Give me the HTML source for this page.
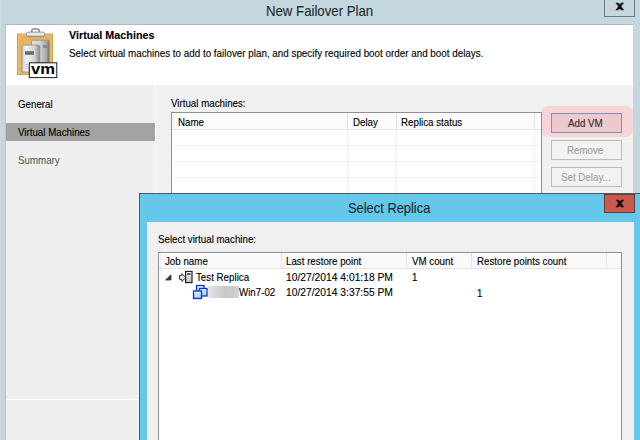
<!DOCTYPE html>
<html><head><meta charset="utf-8">
<style>
*{margin:0;padding:0;box-sizing:border-box}
html,body{width:640px;height:440px;overflow:hidden}
body{position:relative;background:#c5d7de;font-family:"Liberation Sans",sans-serif;font-size:10px;color:#000}
.a{position:absolute}
.t{position:absolute;white-space:nowrap;line-height:1;-webkit-text-stroke:0.12px currentColor;font-size:11px;transform:scaleX(.886);transform-origin:0 0}
</style></head><body>
<div class="a" style="left:0;top:0;width:1px;height:440px;background:#cddbe0"></div>
<!-- main window title -->
<div class="t" style="left:266px;top:3px;font-size:15px;transform:scaleX(.88);color:#1e2a30">New Failover Plan</div>
<div class="a" style="left:604px;top:-1px;width:31px;height:18px;border:1px solid #6e7a7e"></div>
<div class="t" style="left:616px;top:-0.9px;font-size:13.5px;font-weight:bold;transform:none;-webkit-text-stroke:0.6px #000">x</div>

<!-- main content -->
<div class="a" style="left:5px;top:24px;width:628px;height:416px;background:#b4c7ce"></div>
<div class="a" style="left:5px;top:24px;width:628px;height:1px;background:#a9bcc3"></div>
<div class="a" style="left:6px;top:25px;width:627px;height:60px;background:#fff"></div>
<div class="a" style="left:6px;top:85px;width:149px;height:355px;background:#efefef"></div>
<div class="a" style="left:155px;top:85px;width:1px;height:355px;background:#fff"></div>
<div class="a" style="left:156px;top:85px;width:477px;height:355px;background:#f0f0f0"></div>
<div class="a" style="left:6px;top:399px;width:149px;height:1px;background:#fff"></div>


<!-- header icon -->
<svg class="a" style="left:14px;top:26px" width="46" height="54" viewBox="0 0 46 54">
<defs>
<linearGradient id="sv" x1="0" x2="1" y1="0" y2="0"><stop offset="0" stop-color="#d0d0d0"/><stop offset="0.25" stop-color="#f2f2f2"/><stop offset="0.7" stop-color="#d4d4d4"/><stop offset="1" stop-color="#888"/></linearGradient>
<linearGradient id="sv2" x1="0" x2="1" y1="0" y2="0"><stop offset="0" stop-color="#e0e0e0"/><stop offset="0.5" stop-color="#d0d0d0"/><stop offset="0.85" stop-color="#a8a8a8"/><stop offset="1" stop-color="#6a6a6a"/></linearGradient>
<linearGradient id="cl" x1="0" x2="0" y1="0" y2="1"><stop offset="0" stop-color="#c8c8c8"/><stop offset="0.45" stop-color="#fafafa"/><stop offset="1" stop-color="#9a9a9a"/></linearGradient>
</defs>
<rect x="3.5" y="8" width="35" height="40.5" fill="#e7b35c" stroke="#cf9a4a"/>
<rect x="4.5" y="9" width="33" height="38.5" fill="none" stroke="#ecbf70" stroke-width="1"/>
<path d="M17.8 6.8 V4.6 a1.6 1.6 0 0 1 1.6 -1.6 h4.2 a1.6 1.6 0 0 1 1.6 1.6 V6.8" fill="none" stroke="#8c8c8c" stroke-width="1.5"/>
<rect x="12.2" y="6" width="18.6" height="4.8" rx="2.3" fill="url(#cl)" stroke="#8a8a8a" stroke-width="0.8"/>
<path d="M17.5 37 V15.5 q0 -1.3 1.3 -1.3 h15.2 q1.2 0 1.2 1.3 V37 Z" fill="url(#sv2)" stroke="#8a8a8a" stroke-width="0.8"/>
<rect x="29" y="19" width="4" height="3" fill="#8a8a8a"/>
<path d="M8 46 V20.5 q0 -1.5 1.5 -1.5 h14.8 q1.5 0 1.5 1.5 V46 Z" fill="url(#sv)" stroke="#8c8c8c" stroke-width="0.8"/>
<rect x="11" y="25.2" width="9" height="3.6" fill="#6c6c6c"/>
<path d="M11 38.5 h8 M11 40.5 h8 M11 42.5 h8" stroke="#b0b0b0" stroke-width="0.6"/>
<rect x="15.3" y="36.8" width="27.5" height="14.8" fill="#fff" stroke="#1a1a1a" stroke-width="1"/>
<text x="17" y="48.2" font-family="Liberation Sans" font-weight="bold" font-size="15" textLength="24" lengthAdjust="spacingAndGlyphs" fill="#000">vm</text>
</svg>
<!-- header -->
<div class="t" style="left:69px;top:29.5px;font-weight:bold;transform:scaleX(.98)">Virtual Machines</div>
<div class="t" style="left:69px;top:48.2px;transform:scaleX(.894)">Select virtual machines to add to failover plan, and specify required boot order and boot delays.</div>

<!-- nav -->
<div class="t" style="left:18px;top:99.3px">General</div>
<div class="a" style="left:6px;top:122.5px;width:149px;height:18.5px;background:#a3a3a3"></div>
<div class="t" style="left:18px;top:127px">Virtual Machines</div>
<div class="t" style="left:18px;top:155px;color:#606060">Summary</div>

<!-- VM table -->
<div class="t" style="left:171px;top:98.3px">Virtual machines:</div>
<div class="a" style="left:541px;top:106px;width:92px;height:31px;background:#f6d5d8;border-radius:7px"></div>
<div class="a" style="left:171px;top:112px;width:371px;height:330px;border:1px solid #8c9098;background:#fff"></div>
<div class="a" style="left:172px;top:113px;width:369px;height:16px;background:#fbfbfb"></div>
<div class="a" style="left:173px;top:114px;width:1px;height:15px;background:#ececec"></div>
<div class="a" style="left:172px;top:129px;width:369px;height:1px;background:#e5e5e5"></div>

<div class="a" style="left:347px;top:113px;width:1px;height:16px;background:#e5e5e5"></div>
<div class="a" style="left:396px;top:113px;width:1px;height:16px;background:#e5e5e5"></div>
<div class="a" style="left:534px;top:113px;width:1px;height:16px;background:#e5e5e5"></div>
<div class="a" style="left:534px;top:130px;width:1px;height:70px;background:#f0f0f0"></div>
<div class="a" style="left:347px;top:130px;width:1px;height:70px;background:#f0f0f0"></div>
<div class="a" style="left:396px;top:130px;width:1px;height:70px;background:#f0f0f0"></div>
<div class="a" style="left:172px;top:145px;width:369px;height:1px;background:#f0f0f0"></div>
<div class="a" style="left:172px;top:161px;width:369px;height:1px;background:#f0f0f0"></div>
<div class="a" style="left:172px;top:177px;width:369px;height:1px;background:#f0f0f0"></div>
<div class="t" style="left:178px;top:117px">Name</div>
<div class="t" style="left:353px;top:117px">Delay</div>
<div class="t" style="left:401px;top:117px">Replica status</div>

<!-- buttons -->
<div class="a" style="left:551px;top:113px;width:71px;height:20px;border:1px solid #7f8fb5;background:#ecc9cc"></div>
<div class="t" style="left:567.5px;top:118px;color:#302828">Add VM</div>
<div class="a" style="left:551px;top:140px;width:71px;height:20px;border:1px solid #bdbdbd;background:#f2f2f2"></div>
<div class="t" style="left:567px;top:145.1px;color:#a0a0a0">Remove</div>
<div class="a" style="left:551px;top:167px;width:71px;height:20px;border:1px solid #bdbdbd;background:#f2f2f2"></div>
<div class="t" style="left:560.7px;top:172.1px;color:#a0a0a0">Set Delay...</div>

<!-- Select Replica dialog -->
<div class="a" style="left:139px;top:193px;width:502px;height:248px;background:#65c8ea;border:1px solid #505a5e"></div>
<div class="t" style="left:348px;top:200.5px;font-size:14px;transform:scaleX(.92);color:#1a2a30">Select Replica</div>
<div class="a" style="left:604px;top:194px;width:31px;height:19px;background:#c85a4f;border:1px solid #6a3a36"></div>
<div class="t" style="left:616px;top:195.5px;font-size:13.5px;font-weight:bold;transform:none;-webkit-text-stroke:0.6px #000">x</div>
<div class="a" style="left:147px;top:222px;width:487px;height:218px;background:#f0f0f0"></div>
<div class="t" style="left:158px;top:233.5px">Select virtual machine:</div>
<div class="a" style="left:158px;top:252px;width:464px;height:200px;border:1px solid #8c9098;background:#fff"></div>
<div class="a" style="left:159px;top:253px;width:462px;height:15px;background:#f9f9f9"></div>
<div class="a" style="left:160px;top:254px;width:1px;height:14px;background:#ececec"></div>
<div class="a" style="left:159px;top:268px;width:462px;height:1px;background:#e5e5e5"></div>

<div class="a" style="left:281px;top:253px;width:1px;height:15px;background:#e5e5e5"></div>
<div class="a" style="left:406px;top:253px;width:1px;height:15px;background:#e5e5e5"></div>
<div class="a" style="left:471px;top:253px;width:1px;height:15px;background:#e5e5e5"></div>
<div class="a" style="left:606px;top:253px;width:1px;height:15px;background:#e5e5e5"></div>
<svg class="a" style="left:160px;top:268px" width="52" height="34" viewBox="0 0 52 34">
<defs>
<linearGradient id="vb" x1="0" x2="0" y1="0" y2="1"><stop offset="0" stop-color="#e0f6ff"/><stop offset="1" stop-color="#90d0f4"/></linearGradient>
<linearGradient id="sg" x1="0" x2="0" y1="0" y2="1"><stop offset="0" stop-color="#f4f4f4"/><stop offset="1" stop-color="#c0c0c0"/></linearGradient>
</defs>
<path d="M5.5 12 L11 6.8 L11 12 Z" fill="#383838" stroke="#383838" stroke-width="0.8" stroke-linejoin="round"/>
<path d="M19.6 7.6 H21.8 V5.6 L26 9.5 L21.8 13.4 V11.4 H19.6 Z" fill="#e6f4fb" stroke="#303030" stroke-width="1" stroke-linejoin="round"/>
<rect x="25.6" y="3.4" width="6.4" height="11.2" fill="url(#sg)" stroke="#222" stroke-width="1.2"/>
<rect x="27" y="5" width="3.6" height="2" fill="#606060"/>
<rect x="36.5" y="17.5" width="7.5" height="7" fill="url(#vb)" stroke="#1a30cc" stroke-width="1.3"/>
<rect x="39.5" y="20.5" width="7.5" height="7.5" fill="url(#vb)" stroke="#1a30cc" stroke-width="1.3"/>
<rect x="33.5" y="23" width="8" height="7.5" fill="url(#vb)" stroke="#1a30cc" stroke-width="1.3"/>
</svg>
<div class="a" style="left:208px;top:285.5px;width:31px;height:12px;background:linear-gradient(90deg,#e6e6e6,#d8d8d8 25%,#c8c8c8 55%,#cccccc 85%,#d8d8d8)"></div>
<div class="t" style="left:165px;top:255.6px">Job name</div>
<div class="t" style="left:286px;top:255.6px">Last restore point</div>
<div class="t" style="left:412px;top:255.6px">VM count</div>
<div class="t" style="left:477px;top:255.6px">Restore points count</div>
<div class="t" style="left:196px;top:271.7px">Test Replica</div>
<div class="t" style="left:285.6px;top:271.7px;transform:scaleX(.935)">10/27/2014 4:01:18 PM</div>
<div class="t" style="left:412px;top:271.7px">1</div>
<div class="t" style="left:238.5px;top:287.2px">Win7-02</div>
<div class="t" style="left:285.6px;top:287.2px;transform:scaleX(.935)">10/27/2014 3:37:55 PM</div>
<div class="t" style="left:477px;top:287.5px">1</div>
</body></html>
